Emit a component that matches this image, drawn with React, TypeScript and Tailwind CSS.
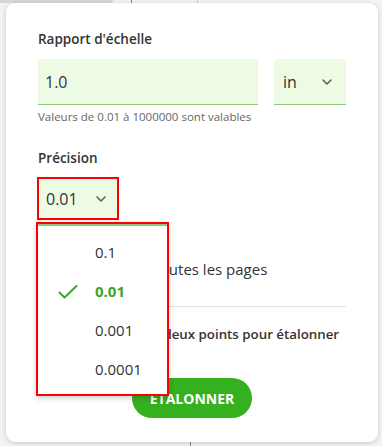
import React from "react";

function Chevron() {
  return (
    <svg width="10" height="6" viewBox="0 0 10 6" fill="none">
      <path d="M1 1l4 4 4-4" stroke="#5f5f5f" strokeWidth="1.6" strokeLinecap="round" strokeLinejoin="round" />
    </svg>
  );
}

export default function App() {
  return (
    <div className="relative w-[382px] h-[446px] bg-[#f2f2f2] overflow-hidden font-['Open_Sans',sans-serif] text-[#333]">
      {/* background app hints */}
      <div className="absolute left-0 top-0 w-[113px] h-[3px] bg-[#d6d6d6] rounded-br-[3px]" />
      <div className="absolute left-[131px] top-0 w-px h-[4px] bg-[#8a8a8a]" />
      <div className="absolute left-[197px] top-0 w-px h-[4px] bg-[#c8c8c8]" />
      <div className="absolute left-[190px] top-[440px] w-px h-[6px] bg-[#8a8a8a]" />

      <div className="relative ml-[6px] mt-[3px] w-[372px] h-[439px] bg-white rounded-[9px] shadow-[0_1px_4px_rgba(0,0,0,0.18)] px-[32px] pt-[26px] flex flex-col">
        <div className="text-[13.5px] leading-[20px] font-semibold text-[#333]">Rapport d'échelle</div>
        <div className="mt-[10px] flex gap-[16px]">
          <div className="w-[220px] h-[46px] bg-[#edfbe5] border-b border-[#8cc97b] flex items-center pl-[7px] text-[16px]">1.0</div>
          <div className="w-[72px] h-[46px] bg-[#edfbe5] border-b border-[#8cc97b] rounded-t-[4px] flex items-center justify-between pl-[9px] pr-[14px] text-[16px]">
            <span>in</span>
            <Chevron />
          </div>
        </div>
        <div className="mt-[4px] text-[11.5px] leading-[16px] text-[#666]">Valeurs de 0.01 à 1000000 sont valables</div>
        <div className="mt-[23px] text-[13.5px] leading-[20px] font-semibold text-[#333]">Précision</div>
        <div className="mt-[9px] -ml-[1px] w-[82px] h-[43px] border-2 border-[#ff0000] bg-[#edfbe5] flex items-center justify-between pl-[7px] pr-[11px] text-[16px]">
          <span>0.01</span>
          <Chevron />
        </div>
        <div className="mt-[37px] flex items-center gap-[14px] h-[24px]">
          <div className="w-[18px] h-[18px] border-2 border-[#666] rounded-[3px]" />
          <span className="text-[15px] leading-[24px]">Appliquer à toutes les pages</span>
        </div>
        <div className="mt-[25px] h-px bg-[#e3e3e3]" />
        <div className="mt-[17px] flex items-center gap-[8px] h-[20px]">
          <div className="w-[33px] h-[20px]" />
          <span className="text-[13.3px] leading-[20px] font-semibold text-[#333]">Sélectionnez deux points pour étalonner</span>
        </div>
        <div className="mt-[34px] flex justify-center">
          <button className="w-[120px] h-[40px] rounded-full bg-[#35b01e] text-white text-[14px] font-bold">ÉTALONNER</button>
        </div>

        {/* dropdown menu */}
        <div className="absolute left-[30px] top-[219px] w-[133px] h-[174px] border-2 border-[#ff0000] bg-white shadow-[0_2px_6px_rgba(0,0,0,0.2)]">
          <div className="h-[2px] bg-[#8fc97d]" />
          <div className="pt-[7px] flex flex-col">
            <div className="h-[39px] flex items-center pl-[57px] text-[15px] text-[#333]">0.1</div>
            <div className="relative h-[39px] flex items-center pl-[57px] text-[15px] font-bold text-[#3aa52a]">
              <svg className="absolute left-[20px] top-[13px]" width="20" height="14" viewBox="0 0 20 14" fill="none">
                <path d="M1.5 7.5l5 5L18.5 1" stroke="#3aa52a" strokeWidth="2" strokeLinecap="round" strokeLinejoin="round" />
              </svg>
              0.01
            </div>
            <div className="h-[39px] flex items-center pl-[57px] text-[15px] text-[#333]">0.001</div>
            <div className="h-[39px] flex items-center pl-[57px] text-[15px] text-[#333]">0.0001</div>
          </div>
        </div>
      </div>
    </div>
  );
}
